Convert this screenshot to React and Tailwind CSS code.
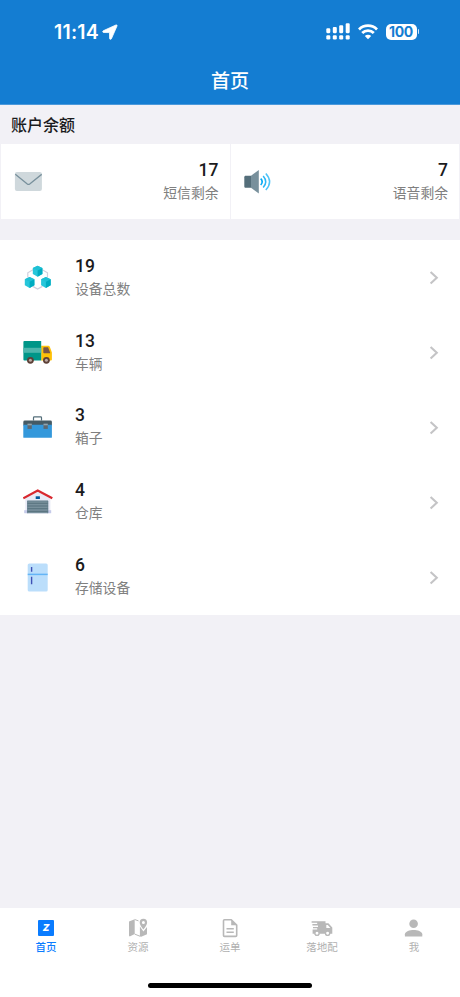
import React from "react";

const Svg = ({ box, className, children }) => (
  <svg viewBox={box} className={`block shrink-0 ${className}`} fill="none">
    {children}
  </svg>
);

const LocationArrow = () => (
  <Svg box="0 0 16 16" className="size-4">
    <path d="M13.9 1 1.2 6.8c-.8.4-.6 1.7.4 1.7l5.9.1.1 5.8c0 1.1 1.3 1.3 1.8.4L15 2c.3-.7-.3-1.4-1.1-1Z" fill="#fff" stroke="#fff" strokeWidth=".8" />
  </Svg>
);

const Signal = () => (
  <Svg box="0 0 24 17" className="w-6 h-[17px]">
    <g fill="#fff">
      {[[0.3, 5.3], [6.8, 4], [13.2, 2.3], [19.7, 0.3]].map(([x, y]) => (
        <React.Fragment key={x}>
          <rect x={x} y={y} width="4" height={10.2 - y} rx="1.1" />
          <rect x={x} y="12.3" width="4" height="4.1" rx="1.2" />
        </React.Fragment>
      ))}
    </g>
  </Svg>
);

const Wifi = () => (
  <Svg box="0 0 20 16" className="w-5 h-4">
    <g stroke="#fff" strokeWidth="2.8">
      <path d="M1 5.4a12.8 12.8 0 0 1 18 0" />
      <path d="M4.2 9a8.2 8.2 0 0 1 11.6 0" />
    </g>
    <path d="m10 15.2-3.2-3.2a4.6 4.6 0 0 1 6.4 0Z" fill="#fff" />
  </Svg>
);

const Mail = () => (
  <Svg box="0 0 28 20" className="w-7 h-5">
    <rect x="0.9" y="0" width="27" height="19" rx="2" fill="#cfd8dc" />
    <path d="m1.3 2.3 12 9.6q1.2.9 2.4 0l12-9.6" stroke="#78909c" strokeWidth="1.3" />
  </Svg>
);

const Speaker = () => (
  <Svg box="0 0 28 24" className="w-7 h-6">
    <path d="M7 5.8 14.8 0v23.6L7 17.8Z" fill="#78909c" />
    <path d="M7 5.8H1.8C.8 5.8.3 6.3.3 7.3v9c0 1 .5 1.5 1.5 1.5H7Z" fill="#546e7a" />
    <path d="M16.7 8.6q3 3.2 0 6.4" stroke="#03a9f4" strokeWidth="1.6" />
    <path d="M19.2 6q5 5.8 0 11.6" stroke="#29b6f6" strokeWidth="1.5" />
    <path d="M21.8 3.5q7.6 8.3 0 16.6" stroke="#4fc3f7" strokeWidth="1.5" />
  </Svg>
);

const Cube = ({ x, y }) => (
  <g transform={`translate(${x} ${y})`}>
    <path d="M0 0 4.8 2.4v6L0 11l-4.8-2.6v-6Z" fill="#26c6da" />
    <path d="M0 0 4.8 2.4 0 4.9l-4.8-2.5Z" fill="#1fc0d4" />
    <path d="m0 4.9 4.8-2.5v6L0 11Z" fill="#00acc1" />
  </g>
);

const Devices = () => (
  <Svg box="0 0 30 30" className="size-[30px]">
    <path d="M10 6.8 4.8 9.8v4.6M19.3 6.8l5.2 3v4.6M9.8 23.4l4.8 2.6 4.8-2.6" stroke="#cfcfdd" strokeWidth="1.2" />
    <Cube x={14.6} y={2.7} />
    <Cube x={6.6} y={13.9} />
    <Cube x={22.9} y={13.9} />
  </Svg>
);

const Truck = () => (
  <Svg box="0 0 30 30" className="size-[30px]">
    <path d="M18.2 7.8h7.2q1 0 1.5 1.2l2 5.4v7.2q0 1-1 1H18.2Z" fill="#ffc107" />
    <path d="M21.1 9.2h4l2 5.2v.9h-6q-.8 0-.8-.8V10q0-.8.8-.8Z" fill="#795548" />
    <path d="M1.4 3h16.8v19.6H1.4q-1 0-1-1V4q0-1 1-1Z" fill="#009688" />
    <path d="M.4 9.8h17.8v5H.4Z" fill="#4db6ac" />
    {[7.4, 23.4].map((x) => (
      <g key={x}>
        <circle cx={x} cy="22.3" r="3.4" fill="#5d4037" />
        <circle cx={x} cy="22.3" r="1.5" fill="#bcaaa4" />
      </g>
    ))}
  </Svg>
);

const Toolbox = () => (
  <Svg box="0 0 30 30" className="size-[30px]">
    <g transform="translate(0 -.5)">
      <path d="M10.5 8V5.2q0-.8.8-.8h6.4q.8 0 .8.8V8" stroke="#546e7a" strokeWidth="1.2" />
      <path d="M1.8 8h25.7q1.4 0 1.4 1.4V13H.3V9.4Q.3 8 1.8 8Z" fill="#455a64" />
      <path d="M.3 12.2h28.6v12.5q0 .6-.6.6H.9q-.6 0-.6-.6Z" fill="#3498db" />
      {[4.5, 20.5].map((x) => (
        <g key={x}>
          <rect x={x} y="11.2" width="4.3" height="5.2" fill="#5d6870" />
          <rect x={x} y="11.2" width="4.3" height="1.6" fill="#90a4ae" />
        </g>
      ))}
    </g>
  </Svg>
);

const Warehouse = () => (
  <Svg box="0 0 30 30" className="size-[30px]">
    <g transform="translate(0 -.5)">
      <path d="M2.3 11 14.7 4.3 27.4 11v14.7H2.3Z" fill="#e8eaf6" />
      <path d="M1.2 22.7h27v3h-27Z" fill="#c5cae9" />
      <path d="M4.3 13.2h20.8v12.5H4.3Z" fill="#78909c" />
      <path d="M4.3 15.8h20.8M4.3 18.5h20.8M4.3 21.2h20.8M4.3 23.9h20.8" stroke="#546e7a" strokeWidth=".9" />
      <path d="M4.6 13.5v12.2M24.8 13.5v12.2M4.3 13.5h20.8" stroke="#607d8b" strokeWidth=".7" />
      <rect x="12.7" y="8.8" width="4.2" height="2.7" fill="#01579b" />
      <path d="M.3 10.8 14.7 3 29.3 10.8" stroke="#d8282f" strokeWidth="2.3" />
    </g>
  </Svg>
);

const Fridge = () => (
  <Svg box="0 0 30 30" className="size-[30px]">
    <g transform="translate(0 -.6)">
      <rect x="4.7" y="1" width="20" height="28.2" rx="1.6" fill="#bbdefb" />
      <path d="M4.7 12h20" stroke="#64b5f6" strokeWidth="1.5" />
      <path d="M8.6 4.6v4.8M8.6 14.4v7.4" stroke="#3f51b5" strokeWidth="1.4" />
    </g>
  </Svg>
);

const Chevron = () => (
  <Svg box="0 0 10 14" className="w-2.5 h-3.5">
    <path d="m1.6 1 6.2 5.8-6.2 5.8" stroke="#c4c4c6" strokeWidth="2.1" />
  </Svg>
);

const MapIcon = () => (
  <Svg box="0 0 20 20" className="size-5">
    <path d="m1 3.4 5.7-2.2v14.9l-4.5 2.2c-.8.3-1.2 0-1.2-.7Z" fill="#b8b8b8" />
    <path d="m6.7 1.5 3.8 1.4M6.7 16.1l5.5 2.2" stroke="#b8b8b8" strokeWidth="1" />
    <path d="M11.9 8.6 15.4 13.6l3.6-4.7v7.4l-5.8 2.5-1.3-.5Z" fill="#b8b8b8" />
    <path fillRule="evenodd" d="M15.4.8a3.7 3.7 0 0 0-3.7 3.8c0 2.9 3.7 7 3.7 7s3.7-4.1 3.7-7A3.7 3.7 0 0 0 15.4.8Zm0 2.3a1.5 1.5 0 1 1 0 3 1.5 1.5 0 0 1 0-3Z" fill="#b8b8b8" />
  </Svg>
);

const DocIcon = () => (
  <Svg box="0 0 20 20" className="size-5">
    <path d="M11.3 1.8H4.5q-1 0-1 1v14.6q0 1 1 1h11.2q1 0 1-1V7.1Z" stroke="#b8b8b8" strokeWidth="1.6" strokeLinejoin="round" />
    <path d="M11.2 1.8v5.5h5.5Z" fill="#b8b8b8" />
    <path d="M6.5 10.8h7.3M6.5 14.3h7.3" stroke="#b8b8b8" strokeWidth="1.4" />
  </Svg>
);

const DeliveryIcon = () => (
  <Svg box="0 0 22 20" className="w-[22px] h-5">
    <path d="M.6 3.3h13.9v2h2.9l3.9 4.2v6.3h-2.1a2.7 2.7 0 0 1-5.3 0H8.6a2.7 2.7 0 0 1-5.3 0H1.6v-4.2h4.6v-1.3H2V8.9h5V7.4H1.4V6h4.8V4.8H.6Z" fill="#b8b8b8" />
    <path d="M15.3 6.9h1.4l2.7 3h-4.1Z" fill="#fff" />
    <circle cx="6" cy="15.3" r="2.1" stroke="#b8b8b8" strokeWidth="1.3" fill="#fff" />
    <circle cx="16.6" cy="15.3" r="2.1" stroke="#b8b8b8" strokeWidth="1.3" fill="#fff" />
  </Svg>
);

const PersonIcon = () => (
  <Svg box="0 0 20 20" className="size-5">
    <circle cx="9.6" cy="5.7" r="4.3" fill="#b8b8b8" />
    <path d="M.9 18.5v-2.2c0-2.9 5-4.3 8.7-4.3s8.7 1.4 8.7 4.3v2.2Z" fill="#b8b8b8" />
  </Svg>
);

const HomeIcon = () => (
  <div className="flex size-5 items-center justify-center">
    <span className="flex size-4 items-center justify-center rounded-[1px] bg-[#0a7cff] font-[Inter] text-[9.5px] leading-none font-black text-white italic">
      Z
    </span>
  </div>
);

const balances = [
  { value: 17, label: "短信剩余", Icon: Mail },
  { value: 7, label: "语音剩余", Icon: Speaker },
];

const resources = [
  { value: 19, label: "设备总数", Icon: Devices },
  { value: 13, label: "车辆", Icon: Truck },
  { value: 3, label: "箱子", Icon: Toolbox },
  { value: 4, label: "仓库", Icon: Warehouse },
  { value: 6, label: "存储设备", Icon: Fridge },
];

const tabs = [
  { label: "首页", Icon: HomeIcon, active: true },
  { label: "资源", Icon: MapIcon },
  { label: "运单", Icon: DocIcon },
  { label: "落地配", Icon: DeliveryIcon },
  { label: "我", Icon: PersonIcon },
];

const Figures = ({ value, label }) => (
  <div>
    <div className="text-[17.5px] leading-[22px] font-medium text-[#1b1b1d]">{value}</div>
    <div className="pt-px text-[13.8px] leading-[22px] text-[#808080]">{label}</div>
  </div>
);

export default function App() {
  return (
    <div className="flex h-[997px] w-[460px] flex-col overflow-hidden bg-[#f2f1f6] font-[Roboto,'Noto_Sans_CJK_SC',sans-serif]">
      <header className="h-[105px] shrink-0 border-b border-[#4c99db] bg-[#147dd2] text-white">
        <div className="flex h-[63px] items-center pr-[41px] pl-[54px]">
          <span className="w-[48px] pt-0.5 font-[Inter] text-[19.5px] leading-none font-semibold tracking-[0.2px]">11:14</span>
          <LocationArrow />
          <div className="ml-auto flex items-center">
            <Signal />
            <div className="ml-2">
              <Wifi />
            </div>
            <div className="ml-2 flex items-center">
              <span className="flex h-4 w-[31px] items-center justify-center rounded-[5px] bg-white font-[Inter] text-[14px] leading-4 font-bold tracking-[-0.3px] text-[#147dd2]">
                100
              </span>
              <span className="ml-px h-[5px] w-[1.5px] rounded-r-full bg-white/80" />
            </div>
          </div>
        </div>
        <h1 className="text-center text-[19px] leading-[38px] font-medium">首页</h1>
      </header>

      <h2 className="h-[39px] shrink-0 pl-[11px] text-base leading-[41px] font-medium text-[#1b1b1d]">账户余额</h2>
      <section className="grid h-[75px] shrink-0 grid-cols-2 gap-px px-px">
        {balances.map(({ Icon, ...item }) => (
          <div key={item.label} className="flex items-center justify-between bg-white pr-[11px] pl-[13px] text-right">
            <Icon />
            <Figures {...item} />
          </div>
        ))}
      </section>

      <ul className="mt-[21px] h-[375px] shrink-0 bg-white pt-px">
        {resources.map(({ Icon, ...item }) => (
          <li key={item.label} className="flex h-[74.8px] items-center pr-[21px] pl-[23px]">
            <Icon />
            <div className="ml-[22px] flex-1 pb-0.5">
              <Figures {...item} />
            </div>
            <Chevron />
          </li>
        ))}
      </ul>

      <footer className="mt-auto flex h-[89px] shrink-0 flex-col bg-white">
        <nav className="grid grid-cols-5 pt-2.5">
          {tabs.map(({ label, Icon, active }) => (
            <div key={label} className="flex flex-col items-center">
              <Icon />
              <span className={`text-[10.5px] leading-5 ${active ? "font-medium text-[#0a7cff]" : "text-[#b0b0b0]"}`}>{label}</span>
            </div>
          ))}
        </nav>
        <div className="mx-auto mt-auto mb-[9px] h-[5px] w-[164px] rounded-full bg-black" />
      </footer>
    </div>
  );
}
